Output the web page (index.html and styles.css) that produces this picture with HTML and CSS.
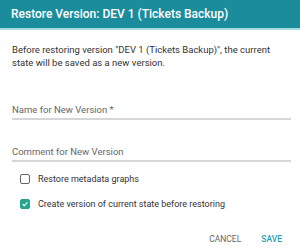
FILE: index.html
```html
<!DOCTYPE html>
<html lang="en">
<head>
  <meta charset="UTF-8" />
  <title>Restore Version</title>
  <link rel="stylesheet" href="styles.css">
</head>
<body>

<div class="dialog">
  <header class="dialog-title">Restore Version: DEV 1 (Tickets Backup)</header>

  <div class="dialog-body">
    <p class="intro">Before restoring version "DEV 1 (Tickets Backup)", the current state will be saved as a new version.</p>

    <div class="field first">
      <label>Name for New Version *</label>
    </div>
    <div class="field">
      <label>Comment for New Version</label>
    </div>

    <div class="checks">
      <label class="check">
        <span class="box"></span>
        Restore metadata graphs
      </label>
      <label class="check">
        <span class="box on">
          <svg width="10" height="10" viewBox="0 0 10 10"><path d="M2 5.2 L4.1 7.2 L8.2 3" fill="none" stroke="#fff" stroke-width="1.4"/></svg>
        </span>
        Create version of current state before restoring
      </label>
    </div>
  </div>

  <div class="actions">
    <button class="btn">CANCEL</button>
    <button class="btn primary">SAVE</button>
  </div>
</div>

</body>
</html>
```

FILE: styles.css
```css
body { margin: 0; font-family: Roboto, "Liberation Sans", sans-serif; background: #fff; color: #333; }
.dialog { width: 300px; height: 251px; background: #fff; overflow: hidden; }
.dialog-title {
  background: #1b8c9c; color: #fff; height: 28px; line-height: 28px;
  padding: 0 11px; font-size: 12px; font-weight: 500;
  border-bottom: 2px solid #a6dbe1;
}
.dialog-body { padding: 0 9px 0 12px; }
.intro { margin: 14px 0 0; font-size: 9.5px; line-height: 12.5px; }
.field { border-bottom: 2px solid #d6d6d6; margin-top: 26px; padding-bottom: 2px; }
.field.first { margin-top: 35px; }
.field label { display: block; font-size: 9.5px; line-height: 12px; color: #666; }
.checks { padding: 10px 0 0 8px; }
.check { display: flex; align-items: center; gap: 8px; font-size: 9px; color: #333; height: 13px; margin-bottom: 12px; }
.box {
  width: 10px; height: 10px; box-sizing: border-box; border: 1.5px solid #666; border-radius: 2px;
  display: flex; align-items: center; justify-content: center;
}
.box.on { background: #26a48e; border-color: #26a48e; }
.actions { display: flex; justify-content: flex-end; gap: 20px; padding: 11px 18px 0 0; }
.btn {
  background: none; border: none; font-family: inherit; font-size: 8.5px; line-height: 12px;
  color: #666; padding: 0;
}
.btn.primary { color: #2a9fb2; font-weight: 500; }
```
